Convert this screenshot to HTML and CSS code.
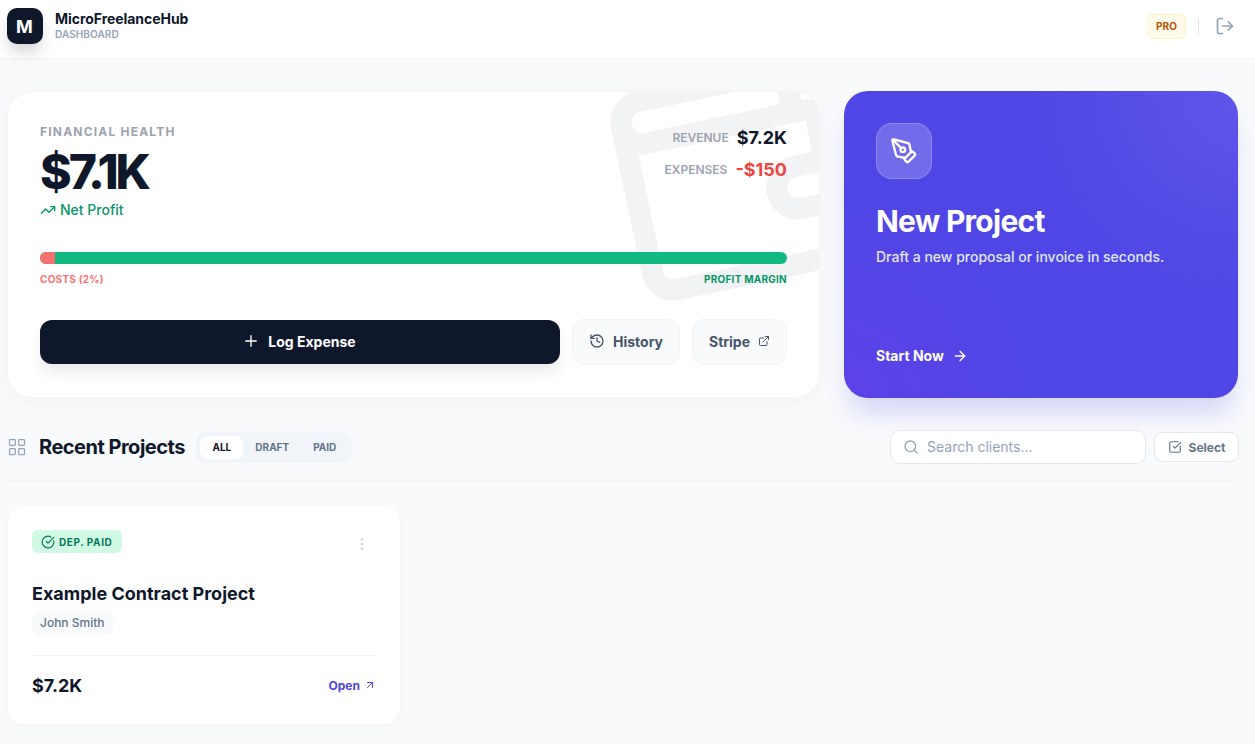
FILE: index.html
```html
<!DOCTYPE html>
<html lang="en">
<head>
<meta charset="utf-8">
<title>MicroFreelanceHub</title>
<link rel="stylesheet" href="styles.css">
</head>
<body>
<header class="topbar">
  <div class="brand">
    <div class="logo">M</div>
    <div class="brand-text">
      <div class="brand-name">MicroFreelanceHub</div>
      <div class="brand-sub">DASHBOARD</div>
    </div>
  </div>
  <div class="top-actions">
    <span class="pro">PRO</span>
    <span class="vline"></span>
    <svg class="ic logout" viewBox="0 0 24 24"><path d="M9 21H5a2 2 0 0 1-2-2V5a2 2 0 0 1 2-2h4"/><polyline points="16 17 21 12 16 7"/><line x1="21" y1="12" x2="9" y2="12"/></svg>
  </div>
</header>
<main class="page">
  <section class="hero">
    <div class="health">
      <svg class="ic bg-wallet" viewBox="0 0 24 24"><path d="M19 7V4a1 1 0 0 0-1-1H5a2 2 0 0 0 0 4h15a1 1 0 0 1 1 1v4h-3a2 2 0 0 0 0 4h3a1 1 0 0 0 1-1v-2a1 1 0 0 0-1-1"/><path d="M3 5v14a2 2 0 0 0 2 2h15a1 1 0 0 0 1-1v-4"/></svg>
      <div class="health-top">
        <div>
          <div class="eyebrow">FINANCIAL HEALTH</div>
          <div class="big">$7.1K</div>
          <div class="net"><svg class="ic" viewBox="0 0 24 24"><polyline points="22 7 13.5 15.5 8.5 10.5 2 17"/><polyline points="16 7 22 7 22 13"/></svg>Net Profit</div>
        </div>
        <div class="figures">
          <div class="figure"><span class="fig-label">REVENUE</span><span class="fig-value">$7.2K</span></div>
          <div class="figure"><span class="fig-label">EXPENSES</span><span class="fig-value red">-$150</span></div>
        </div>
      </div>
      <div class="bar"><div class="bar-cost"></div></div>
      <div class="bar-labels"><span class="cost-label">COSTS (2%)</span><span class="margin-label">PROFIT MARGIN</span></div>
      <div class="actions">
        <button class="btn-dark"><svg class="ic" viewBox="0 0 24 24"><path d="M5 12h14"/><path d="M12 5v14"/></svg>Log Expense</button>
        <button class="btn-soft"><svg class="ic" viewBox="0 0 24 24"><path d="M3 12a9 9 0 1 0 9-9 9.75 9.75 0 0 0-6.74 2.74L3 8"/><path d="M3 3v5h5"/><path d="M12 7v5l4 2"/></svg>History</button>
        <button class="btn-soft stripe">Stripe<svg class="ic" viewBox="0 0 24 24"><path d="M15 3h6v6"/><path d="M10 14 21 3"/><path d="M18 13v6a2 2 0 0 1-2 2H5a2 2 0 0 1-2-2V8a2 2 0 0 1 2-2h6"/></svg></button>
      </div>
    </div>
    <div class="new-project">
      <div class="pen-box"><svg class="ic" viewBox="0 0 24 24"><path d="M15.707 21.293a1 1 0 0 1-1.414 0l-1.586-1.586a1 1 0 0 1 0-1.414l5.586-5.586a1 1 0 0 1 1.414 0l1.586 1.586a1 1 0 0 1 0 1.414z"/><path d="m18 13-1.375-6.874a1 1 0 0 0-.746-.776L3.235 2.028a1 1 0 0 0-1.207 1.207L5.35 15.879a1 1 0 0 0 .776.746L13 18"/><path d="m2.3 2.3 7.286 7.286"/><circle cx="11" cy="11" r="2"/></svg></div>
      <h2 class="np-title">New Project</h2>
      <p class="np-text">Draft a new proposal or invoice in seconds.</p>
      <div class="np-link">Start Now<svg class="ic" viewBox="0 0 24 24"><path d="M5 12h14"/><path d="m12 5 7 7-7 7"/></svg></div>
    </div>
  </section>
  <section class="list-head">
    <div class="list-left">
      <svg class="ic grid-ic" viewBox="0 0 24 24"><rect x="3" y="3" width="7" height="7" rx="1"/><rect x="14" y="3" width="7" height="7" rx="1"/><rect x="14" y="14" width="7" height="7" rx="1"/><rect x="3" y="14" width="7" height="7" rx="1"/></svg>
      <h2 class="list-title">Recent Projects</h2>
      <div class="tabs"><span class="tab active">ALL</span><span class="tab">DRAFT</span><span class="tab">PAID</span></div>
    </div>
    <div class="list-right">
      <label class="search"><svg class="ic" viewBox="0 0 24 24"><circle cx="11" cy="11" r="8"/><path d="m21 21-4.3-4.3"/></svg><span>Search clients...</span></label>
      <button class="select"><svg class="ic" viewBox="0 0 24 24"><path d="M21 10.5V19a2 2 0 0 1-2 2H5a2 2 0 0 1-2-2V5a2 2 0 0 1 2-2h12.5"/><path d="m9 11 3 3L22 4"/></svg>Select</button>
    </div>
  </section>
  <article class="project">
    <div class="project-top">
      <span class="status"><svg class="ic" viewBox="0 0 24 24"><path d="M21.801 10A10 10 0 1 1 17 3.335"/><path d="m9 11 3 3L22 4"/></svg>DEP. PAID</span>
      <svg class="ic more" viewBox="0 0 24 24"><circle cx="12" cy="12" r="1"/><circle cx="12" cy="5" r="1"/><circle cx="12" cy="19" r="1"/></svg>
    </div>
    <h3 class="project-title">Example Contract Project</h3>
    <span class="client">John Smith</span>
    <div class="project-foot">
      <span class="amount">$7.2K</span>
      <span class="open">Open<svg class="ic" viewBox="0 0 24 24"><path d="M7 7h10v10"/><path d="M7 17 17 7"/></svg></span>
    </div>
  </article>
</main>
</body>
</html>
```
FILE: styles.css
```css
* { box-sizing: border-box; }
html, body { margin: 0; padding: 0; }
body { background: #f8fafc; font-family: Inter, "Liberation Sans", sans-serif; color: #0f172a; height: 744px; overflow: hidden; }
button { font-family: inherit; cursor: pointer; }
.ic { fill: none; stroke: currentColor; stroke-width: 2; stroke-linecap: round; stroke-linejoin: round; display: block; flex: none; }

.topbar { height: 59px; background: #fff; border-bottom: 1px solid #f1f5f9; display: flex; align-items: center; justify-content: space-between; padding: 0 20px 7px 7px; }
.brand { display: flex; align-items: center; gap: 12px; padding-top: 1px; }
.logo { width: 36px; height: 36px; border-radius: 10px; background: #0f172a; color: #fff; font-weight: 700; font-size: 18px; display: flex; align-items: center; justify-content: center; padding-right: 1px; box-shadow: 0 10px 15px -3px rgba(15,23,42,.2); }
.brand-text { margin-bottom: 1px; }
.brand-name { font-size: 14px; font-weight: 700; line-height: 17px; letter-spacing: -.05px; }
.brand-sub { font-size: 10px; font-weight: 600; line-height: 14px; color: #94a3b8; letter-spacing: .1px; }
.top-actions { display: flex; align-items: center; }
.pro { width: 39px; height: 25px; margin-top: 1px; background: #fffbeb; border: 1px solid #fef3c7; border-radius: 6px; color: #b45309; font-size: 10px; font-weight: 700; display: flex; align-items: center; justify-content: center; }
.vline { width: 1px; height: 16px; background: #e2e8f0; margin: 0 16px 0 12px; }
.logout { width: 20px; height: 20px; color: #94a3b8; }

.page { padding: 32px 16px 0 8px; }
.hero { display: grid; grid-template-columns: 811px 394px; gap: 25px; align-items: start; }
.health { position: relative; overflow: hidden; height: 305px; margin-top: 1px; background: #fff; border-radius: 24px; padding: 32px 32px 0; box-shadow: 0 0 0 1px #f1f5f9, 0 4px 20px rgba(15,23,42,.03); }
.bg-wallet { position: absolute; right: -40px; top: -40px; width: 256px; height: 256px; color: #111827; opacity: .05; transform: rotate(-12deg); }
.health-top { position: relative; display: flex; justify-content: space-between; height: 128px; }
.eyebrow { font-size: 12px; font-weight: 700; letter-spacing: 1.2px; color: #9ca3af; line-height: 14px; margin-top: 1px; }
.big { font-size: 48px; font-weight: 800; letter-spacing: -3px; line-height: 48px; margin-top: 9px; }
.net { display: flex; align-items: center; gap: 4px; font-size: 14px; font-weight: 500; color: #059669; line-height: 17px; margin-top: 5px; }
.net .ic { width: 16px; height: 16px; }
.figures { display: flex; flex-direction: column; align-items: flex-end; gap: 8px; padding-top: 1px; }
.figure { display: flex; align-items: center; gap: 8px; height: 24px; }
.fig-label { font-size: 12px; font-weight: 600; color: #9ca3af; }
.fig-value { font-size: 18px; font-weight: 700; }
.fig-value.red { color: #ef4444; }
.bar { position: relative; height: 12px; border-radius: 6px; background: #10b981; overflow: hidden; }
.bar-cost { width: 15px; height: 12px; background: #f87171; }
.bar-labels { position: relative; display: flex; justify-content: space-between; font-size: 10px; font-weight: 700; letter-spacing: .25px; line-height: 12px; margin-top: 9px; }
.cost-label { color: #f87171; }
.margin-label { color: #059669; }
.actions { position: relative; display: flex; align-items: center; gap: 12px; margin-top: 34px; }
.btn-dark { width: 520px; height: 44px; border: 0; border-radius: 12px; background: #0f172a; color: #fff; font-size: 14px; font-weight: 700; display: flex; align-items: center; justify-content: center; gap: 8px; padding: 0 2px 2px 0; box-shadow: 0 10px 15px -3px rgba(15,23,42,.1); }
.btn-dark .ic { width: 18px; height: 18px; stroke-width: 1.8; }
.btn-soft { height: 46px; border: 1px solid #f1f5f9; border-radius: 12px; background: #f8fafc; color: #475569; font-size: 14px; font-weight: 700; display: flex; align-items: center; justify-content: center; gap: 8px; width: 108px; padding: 0 0 2px; }
.btn-soft .ic { width: 16px; height: 16px; }
.stripe { width: 95px; }
.stripe .ic { width: 12px; height: 12px; }

.new-project { height: 307px; border-radius: 24px; padding: 32px; color: #fff; background: radial-gradient(circle at 100% 0, #6055e9 0, rgba(97,85,234,0) 42%), radial-gradient(circle at 0 100%, #5c42e8 0, rgba(94,67,233,0) 42%), #4f46e5; box-shadow: 0 20px 25px -5px rgba(79,70,229,.2); }
.pen-box { width: 56px; height: 56px; border-radius: 16px; background: rgba(255,255,255,.2); border: 1px solid rgba(255,255,255,.2); display: flex; align-items: center; justify-content: center; }
.pen-box .ic { width: 28px; height: 28px; }
.np-title { margin: 24px 0 0; font-size: 30px; line-height: 36px; font-weight: 700; letter-spacing: -.75px; }
.np-text { margin: 8px 0 0; font-size: 14px; line-height: 20px; font-weight: 500; color: #e0e7ff; }
.np-link { display: flex; align-items: center; gap: 8px; font-size: 14px; font-weight: 700; line-height: 20px; margin-top: 79px; }
.np-link .ic { width: 16px; height: 16px; }

.list-head { width: 1231px; padding: 32px 0 16px; border-bottom: 1px solid #f1f5f9; display: flex; justify-content: space-between; align-items: center; }
.list-left { display: flex; align-items: center; }
.grid-ic { width: 20px; height: 20px; color: #94a3b8; stroke-width: 1.5; margin-left: -1px; margin-right: 12px; }
.list-title { margin: 0 11px 0 0; font-size: 20px; font-weight: 700; letter-spacing: -.5px; line-height: 28px; }
.tabs { display: flex; background: #f1f5f9; border-radius: 10px; padding: 4px; height: 31px; }
.tab { font-size: 10px; font-weight: 700; color: #64748b; padding: 0 11.5px 0 12.5px; display: flex; align-items: center; border-radius: 8px; }
.tab.active { background: #fff; color: #0f172a; width: 43px; padding: 0 0 0 1px; justify-content: center; }
.list-right { display: flex; align-items: center; gap: 8px; }
.search { width: 256px; height: 34px; background: #fff; border: 1px solid #e2e8f0; border-radius: 10px; display: flex; align-items: center; gap: 8px; padding: 0 0 1px 12px; font-size: 14px; color: #94a3b8; }
.search .ic { width: 16px; height: 16px; }
.select { width: 85px; height: 30px; background: #fff; border: 1px solid #e2e8f0; border-radius: 8px; color: #64748b; font-size: 12px; font-weight: 700; display: flex; align-items: center; justify-content: center; gap: 7px; padding: 0; }
.select .ic { width: 14px; height: 14px; color: #64748b; }

.project { width: 392px; height: 218px; margin-top: 25px; background: #fff; border-radius: 16px; padding: 24px; box-shadow: 0 0 0 1px #f5f7fa, 0 2px 4px rgba(15,23,42,.04); display: flex; flex-direction: column; align-items: flex-start; }
.project-top { display: flex; justify-content: space-between; align-items: center; width: 100%; padding-right: 6px; flex: none; }
.status { height: 23px; width: 90px; border-radius: 6px; background: #d1fae5; color: #047857; font-size: 10px; font-weight: 700; letter-spacing: .6px; display: flex; align-items: center; gap: 4px; padding-left: 9px; }
.status .ic { width: 14px; height: 14px; }
.more { width: 16px; height: 16px; color: #cbd5e1; margin-top: 4px; }
.project-title { margin: 27px 0 0; font-size: 18px; line-height: 28px; font-weight: 700; }
.client { margin-top: 3px; height: 24px; padding: 0 8px 1px; border-radius: 6px; background: #f8fafc; color: #64748b; font-size: 12px; font-weight: 500; display: flex; align-items: center; flex: none; }
.project-foot { width: 100%; flex: none; margin-top: 20px; border-top: 1px solid #f1f5f9; padding-top: 16px; display: flex; justify-content: space-between; align-items: center; }
.amount { font-size: 18px; font-weight: 700; line-height: 28px; }
.open { display: flex; align-items: center; gap: 4px; font-size: 12px; font-weight: 700; color: #4f46e5; padding-bottom: 2px; }
.open .ic { width: 12px; height: 12px; }
```
